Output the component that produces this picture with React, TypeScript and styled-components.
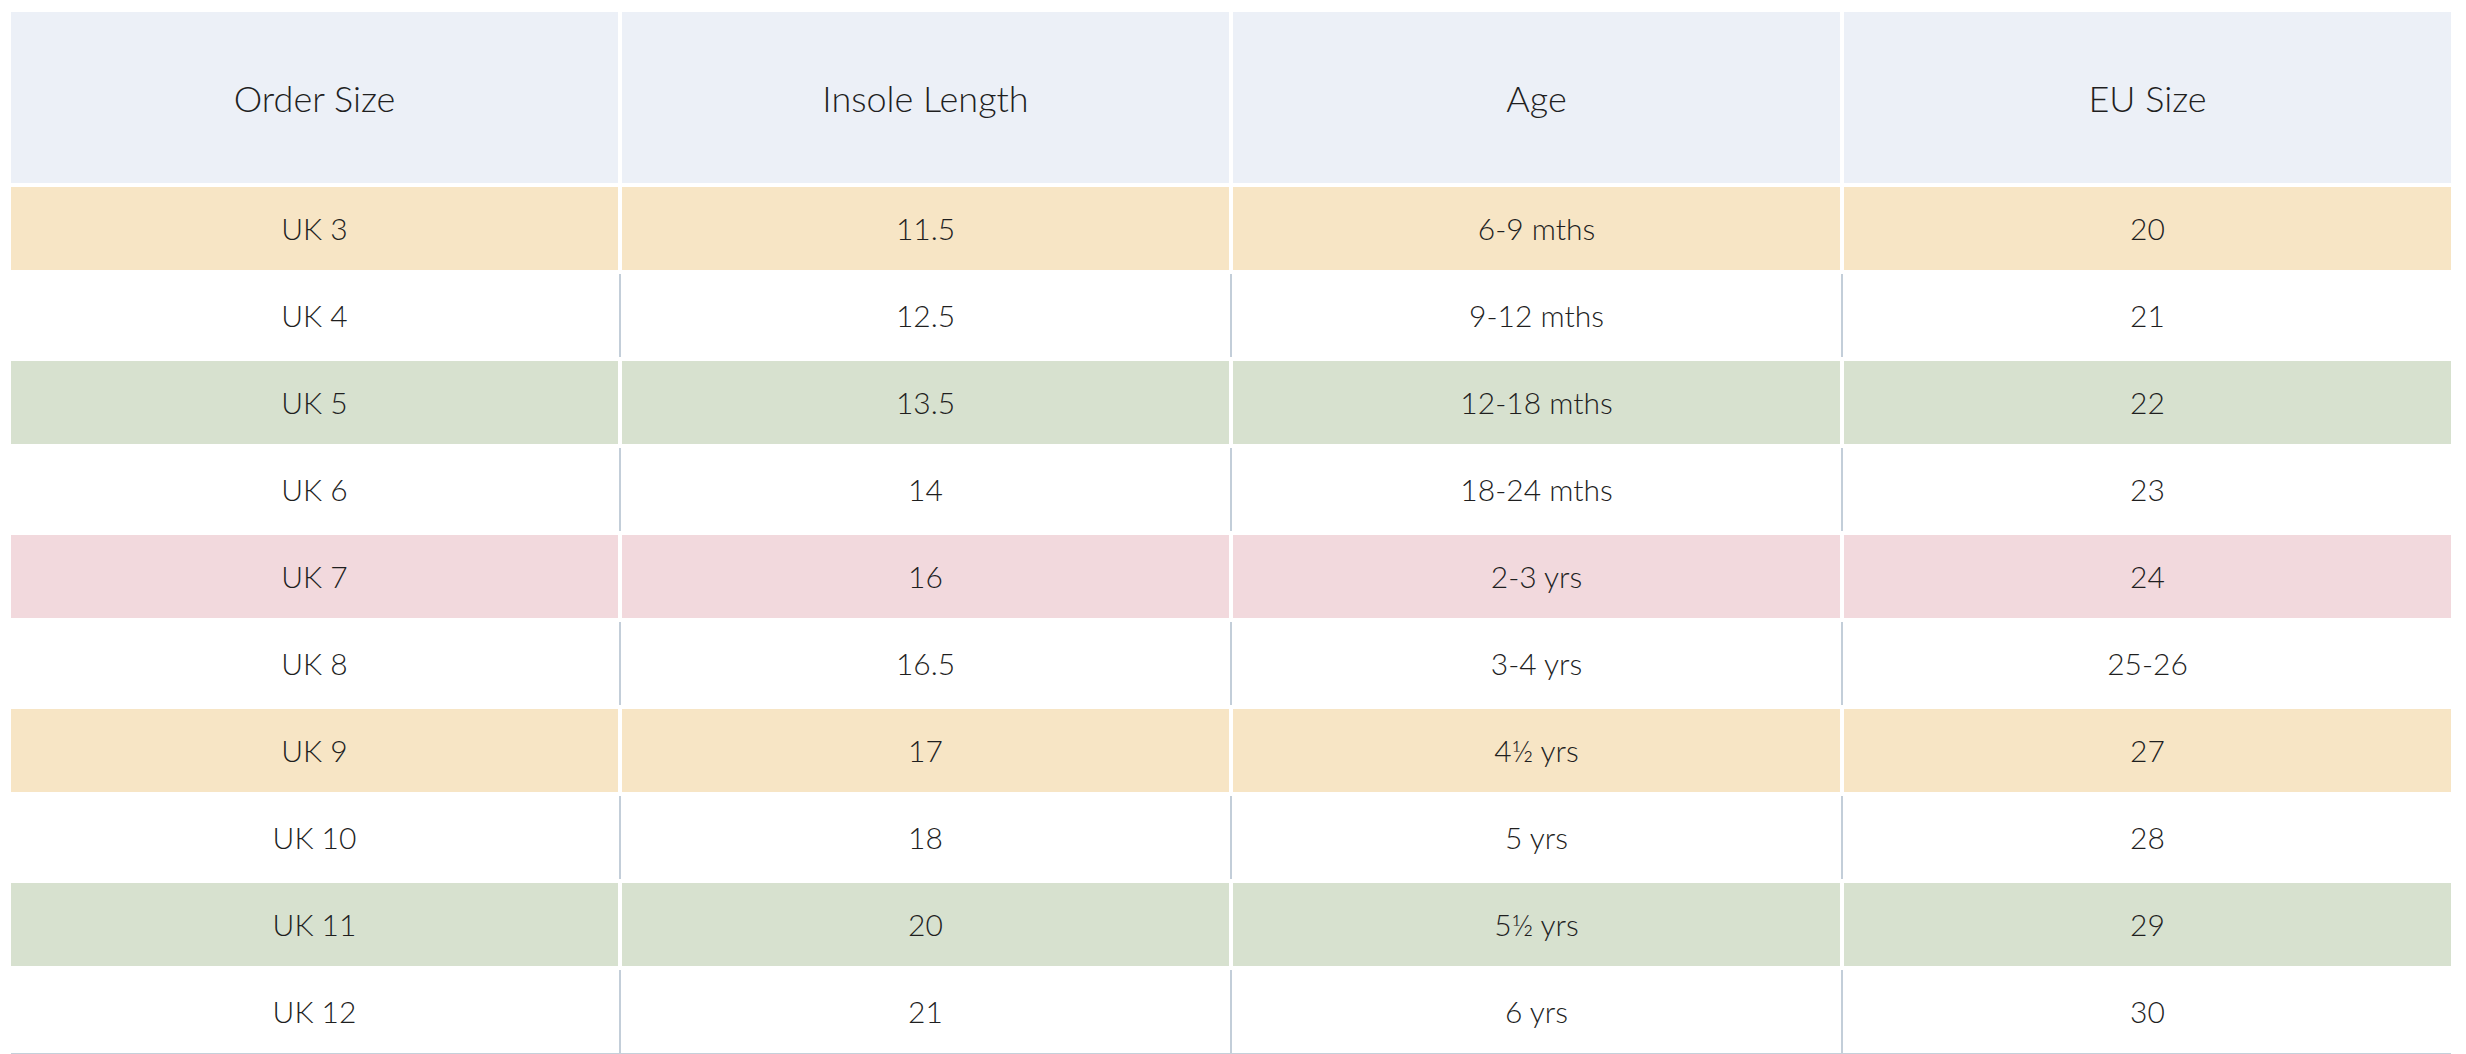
import React, { FC } from "react";
import styled, { createGlobalStyle } from "styled-components";

type Tone = "yellow" | "green" | "pink" | "white";

interface SizeRow {
  order: string;
  insole: string;
  age: string;
  eu: string;
  tone: Tone;
}

const rows: SizeRow[] = [
  { order: "UK 3", insole: "11.5", age: "6-9 mths", eu: "20", tone: "yellow" },
  { order: "UK 4", insole: "12.5", age: "9-12 mths", eu: "21", tone: "white" },
  { order: "UK 5", insole: "13.5", age: "12-18 mths", eu: "22", tone: "green" },
  { order: "UK 6", insole: "14", age: "18-24 mths", eu: "23", tone: "white" },
  { order: "UK 7", insole: "16", age: "2-3 yrs", eu: "24", tone: "pink" },
  { order: "UK 8", insole: "16.5", age: "3-4 yrs", eu: "25-26", tone: "white" },
  { order: "UK 9", insole: "17", age: "4½ yrs", eu: "27", tone: "yellow" },
  { order: "UK 10", insole: "18", age: "5 yrs", eu: "28", tone: "white" },
  { order: "UK 11", insole: "20", age: "5½ yrs", eu: "29", tone: "green" },
  { order: "UK 12", insole: "21", age: "6 yrs", eu: "30", tone: "white" },
];

const tones: Record<Tone, string> = {
  yellow: "#f7e5c5",
  green: "#d7e1cf",
  pink: "#f2d9dd",
  white: "#ffffff",
};

const headings = ["Order Size", "Insole Length", "Age", "EU Size"];

const GlobalStyle = createGlobalStyle`
  html, body {
    margin: 0;
    padding: 0;
    background: #ffffff;
  }
  body {
    font-family: Lato, "Open Sans", "Liberation Sans", sans-serif;
    color: #222222;
  }
`;

export const SizeChart: FC = () => {
  return (
    <Wrapper>
      <Table>
        <HeadRow>
          {headings.map((h) => (
            <HeadCell key={h}>{h}</HeadCell>
          ))}
        </HeadRow>
        {rows.map((r, i) => {
          const values = [r.order, r.insole, r.age, r.eu];
          return (
            <Row key={r.order} $last={i === rows.length - 1}>
              {values.map((v, j) => (
                <Cell
                  key={j}
                  $tone={r.tone}
                  $divider={r.tone === "white" && j > 0}
                >
                  {v}
                </Cell>
              ))}
            </Row>
          );
        })}
      </Table>
    </Wrapper>
  );
};

export default function App() {
  return (
    <>
      <GlobalStyle />
      <SizeChart />
    </>
  );
}

const Wrapper = styled.div`
  padding: 12px 15px 0 11px;
`;

const Table = styled.div`
  display: flex;
  flex-direction: column;
  gap: 4px;
`;

const HeadRow = styled.div`
  display: grid;
  grid-template-columns: repeat(4, 1fr);
  column-gap: 4px;
  height: 171px;
`;

const HeadCell = styled.div`
  background: #ecf0f7;
  display: flex;
  align-items: center;
  justify-content: center;
  font-size: 36px;
  font-weight: 300;
  color: #1f1f1f;
`;

const Row = styled.div<{ $last: boolean }>`
  display: grid;
  grid-template-columns: repeat(4, 1fr);
  column-gap: 4px;
  height: 83px;
  border-bottom: ${(p) => (p.$last ? "3px solid #c5d0da" : "none")};
`;

const Cell = styled.div<{ $tone: Tone; $divider: boolean }>`
  position: relative;
  background: ${(p) => tones[p.$tone]};
  display: flex;
  align-items: center;
  justify-content: center;
  padding-bottom: 2px;
  font-size: 30px;
  font-weight: 300;
  color: #1f1f1f;

  &::before {
    content: "";
    display: ${(p) => (p.$divider ? "block" : "none")};
    position: absolute;
    top: 0;
    bottom: 0;
    left: -3px;
    width: 2px;
    background: #c3ced9;
  }
`;
